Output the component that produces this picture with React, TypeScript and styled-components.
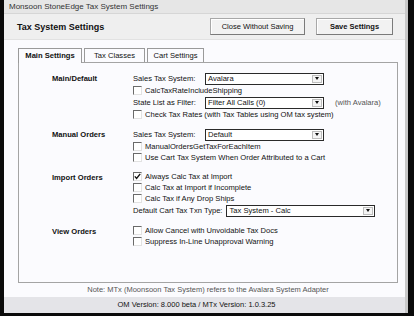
import styled, { createGlobalStyle, css } from "styled-components";

const GlobalStyle = createGlobalStyle`
  html, body { margin: 0; padding: 0; background: #0a0a0a; }
  body { font-family: "Liberation Sans", Arial, sans-serif; }
`;

const Frame = styled.div`
  width: 414px;
  height: 316px;
  background: #0a0a0a;
  padding: 0 6px 3px 4px;
  box-sizing: border-box;
`;

const Window = styled.div`
  width: 404px;
  height: 313px;
  display: flex;
  flex-direction: column;
  background: #fbfbfe;
  border-right: 3px solid #c8c8c8;
  box-sizing: border-box;
  font-size: 8px;
  color: #111;
`;

const TitleBar = styled.div`
  height: 14px;
  line-height: 14px;
  padding-left: 5px;
  background: #e6e6e6;
  border-bottom: 1px solid #d6d6d6;
  color: #333;
  font-size: 8px;
  box-sizing: border-box;
`;

const Header = styled.div`
  height: 26px;
  display: flex;
  align-items: center;
  padding: 0 12px 0 13px;
  background: #efefef;
  border-bottom: 1px solid #e2e2e2;
  box-sizing: border-box;
`;

const HeaderTitle = styled.div`
  font-weight: bold;
  font-size: 9px;
  flex: 1;
`;

const Button = styled.button<{ $primary?: boolean; $w: number }>`
  width: ${(p) => p.$w}px;
  height: 17px;
  margin-left: ${(p) => (p.$primary ? 11 : 0)}px;
  padding: 0;
  font-family: "Liberation Sans", Arial, sans-serif;
  font-size: 7.5px;
  font-weight: ${(p) => (p.$primary ? "bold" : "normal")};
  color: #111;
  background: #f2f2f2;
  border: 1px solid #a8a8a8;
  border-right-color: #7a7a7a;
  border-bottom-color: #7a7a7a;
  box-shadow: inset 1px 1px 0 #ffffff;
`;

const Content = styled.div`
  flex: 1;
  display: flex;
  flex-direction: column;
  padding: 8px 7px 0 14px;
`;

const Tabs = styled.div`
  display: flex;
  gap: 2px;
  height: 14px;
`;

const Tab = styled.div<{ $active?: boolean; $w: number }>`
  width: ${(p) => p.$w}px;
  height: 14px;
  line-height: 13px;
  text-align: center;
  font-size: 7.6px;
  border: 1px solid #9a9a9a;
  border-bottom: none;
  background: #fbfbfe;
  box-sizing: border-box;
  ${(p) =>
    p.$active &&
    css`
      font-weight: bold;
      height: 15px;
      margin-bottom: -1px;
      position: relative;
    `}
`;

const Panel = styled.div`
  height: 221px;
  border: 1px solid #a4a4a4;
  box-sizing: border-box;
  padding: 9px 0 0 33px;
`;

const Section = styled.div`
  display: flex;
  margin-bottom: 8px;
`;

const SectionLabel = styled.div`
  width: 81px;
  font-weight: bold;
  font-size: 7.6px;
  line-height: 13px;
`;

const Controls = styled.div`
  display: flex;
  flex-direction: column;
`;

const Row = styled.div<{ $tall?: boolean }>`
  display: flex;
  align-items: center;
  height: ${(p) => (p.$tall ? 13 : 11)}px;
  white-space: nowrap;
  font-size: 7.6px;
`;

const FieldLabel = styled.span<{ $w?: number }>`
  width: ${(p) => (p.$w ? `${p.$w}px` : "auto")};
  margin-right: ${(p) => (p.$w ? 0 : 4)}px;
`;

const Select = styled.div<{ $w: number }>`
  width: ${(p) => p.$w}px;
  height: 12px;
  display: flex;
  align-items: center;
  background: #fff;
  border: 1px solid #2a2a2a;
  box-sizing: border-box;
  padding-left: 2px;
  font-size: 7.6px;
`;

const SelectText = styled.span`
  flex: 1;
`;

const SelectButton = styled.span`
  width: 10px;
  height: 8px;
  margin-right: 1px;
  border: 1px solid #bdbdbd;
  background: #f4f4f4;
  box-sizing: border-box;
  display: flex;
  align-items: center;
  justify-content: center;
  &::after {
    content: "";
    border-left: 2.5px solid transparent;
    border-right: 2.5px solid transparent;
    border-top: 3px solid #111;
  }
`;

const Hint = styled.span`
  margin-left: 11px;
  color: #555;
`;

const Box = styled.span`
  width: 9px;
  height: 9px;
  margin-right: 3px;
  box-sizing: border-box;
  background: #fff;
  border-top: 1px solid #6a6a6a;
  border-left: 1px solid #6a6a6a;
  border-bottom: 1px solid #e2e2e2;
  border-right: 1px solid #e2e2e2;
  display: flex;
  align-items: center;
  justify-content: center;
`;

const Note = styled.div`
  text-align: center;
  color: #555;
  font-size: 7.5px;
  height: 14px;
  line-height: 14px;
`;

const Footer = styled.div`
  height: 16px;
  line-height: 16px;
  text-align: center;
  background: #e4e4e8;
  font-size: 7.5px;
  padding-right: 16px;
`;

function Check({ label, checked }: { label: string; checked?: boolean }) {
  return (
    <Row>
      <Box>
        {checked && (
          <svg width="7" height="7" viewBox="0 0 7 7">
            <path d="M0.8 3.4 L2.6 5.4 L6.2 0.9" fill="none" stroke="#111" strokeWidth="1.4" />
          </svg>
        )}
      </Box>
      {label}
    </Row>
  );
}

function Dropdown({ value, width }: { value: string; width: number }) {
  return (
    <Select $w={width}>
      <SelectText>{value}</SelectText>
      <SelectButton />
    </Select>
  );
}

export default function App() {
  return (
    <Frame>
      <GlobalStyle />
      <Window>
        <TitleBar>Monsoon StoneEdge Tax System Settings</TitleBar>
        <Header>
          <HeaderTitle>Tax System Settings</HeaderTitle>
          <Button $w={95}>Close Without Saving</Button>
          <Button $w={77} $primary>Save Settings</Button>
        </Header>
        <Content>
          <Tabs>
            <Tab $w={64} $active>Main Settings</Tab>
            <Tab $w={61}>Tax Classes</Tab>
            <Tab $w={57}>Cart Settings</Tab>
          </Tabs>
          <Panel>
            <Section>
              <SectionLabel>Main/Default</SectionLabel>
              <Controls>
                <Row $tall>
                  <FieldLabel $w={72}>Sales Tax System:</FieldLabel>
                  <Dropdown value="Avalara" width={119} />
                </Row>
                <Check label="CalcTaxRateIncludeShipping" />
                <Row $tall>
                  <FieldLabel $w={72}>State List as Filter:</FieldLabel>
                  <Dropdown value="Filter All Calls (0)" width={119} />
                  <Hint>(with Avalara)</Hint>
                </Row>
                <Check label="Check Tax Rates (with Tax Tables using OM tax system)" />
              </Controls>
            </Section>
            <Section>
              <SectionLabel>Manual Orders</SectionLabel>
              <Controls>
                <Row $tall>
                  <FieldLabel $w={72}>Sales Tax System:</FieldLabel>
                  <Dropdown value="Default" width={119} />
                </Row>
                <Check label="ManualOrdersGetTaxForEachItem" />
                <Check label="Use Cart Tax System When Order Attributed to a Cart" />
              </Controls>
            </Section>
            <Section>
              <SectionLabel>Import Orders</SectionLabel>
              <Controls>
                <Check label="Always Calc Tax at Import" checked />
                <Check label="Calc Tax at Import if Incomplete" />
                <Check label="Calc Tax if Any Drop Ships" />
                <Row $tall>
                  <FieldLabel>Default Cart Tax Txn Type:</FieldLabel>
                  <Dropdown value="Tax System - Calc" width={149} />
                </Row>
              </Controls>
            </Section>
            <Section>
              <SectionLabel>View Orders</SectionLabel>
              <Controls>
                <Check label="Allow Cancel with Unvoidable Tax Docs" />
                <Check label="Suppress In-Line Unapproval Warning" />
              </Controls>
            </Section>
          </Panel>
          <Note>Note: MTx (Moonsoon Tax System) refers to the Avalara System Adapter</Note>
        </Content>
        <Footer>OM Version: 8.000 beta / MTx Version: 1.0.3.25</Footer>
      </Window>
    </Frame>
  );
}
